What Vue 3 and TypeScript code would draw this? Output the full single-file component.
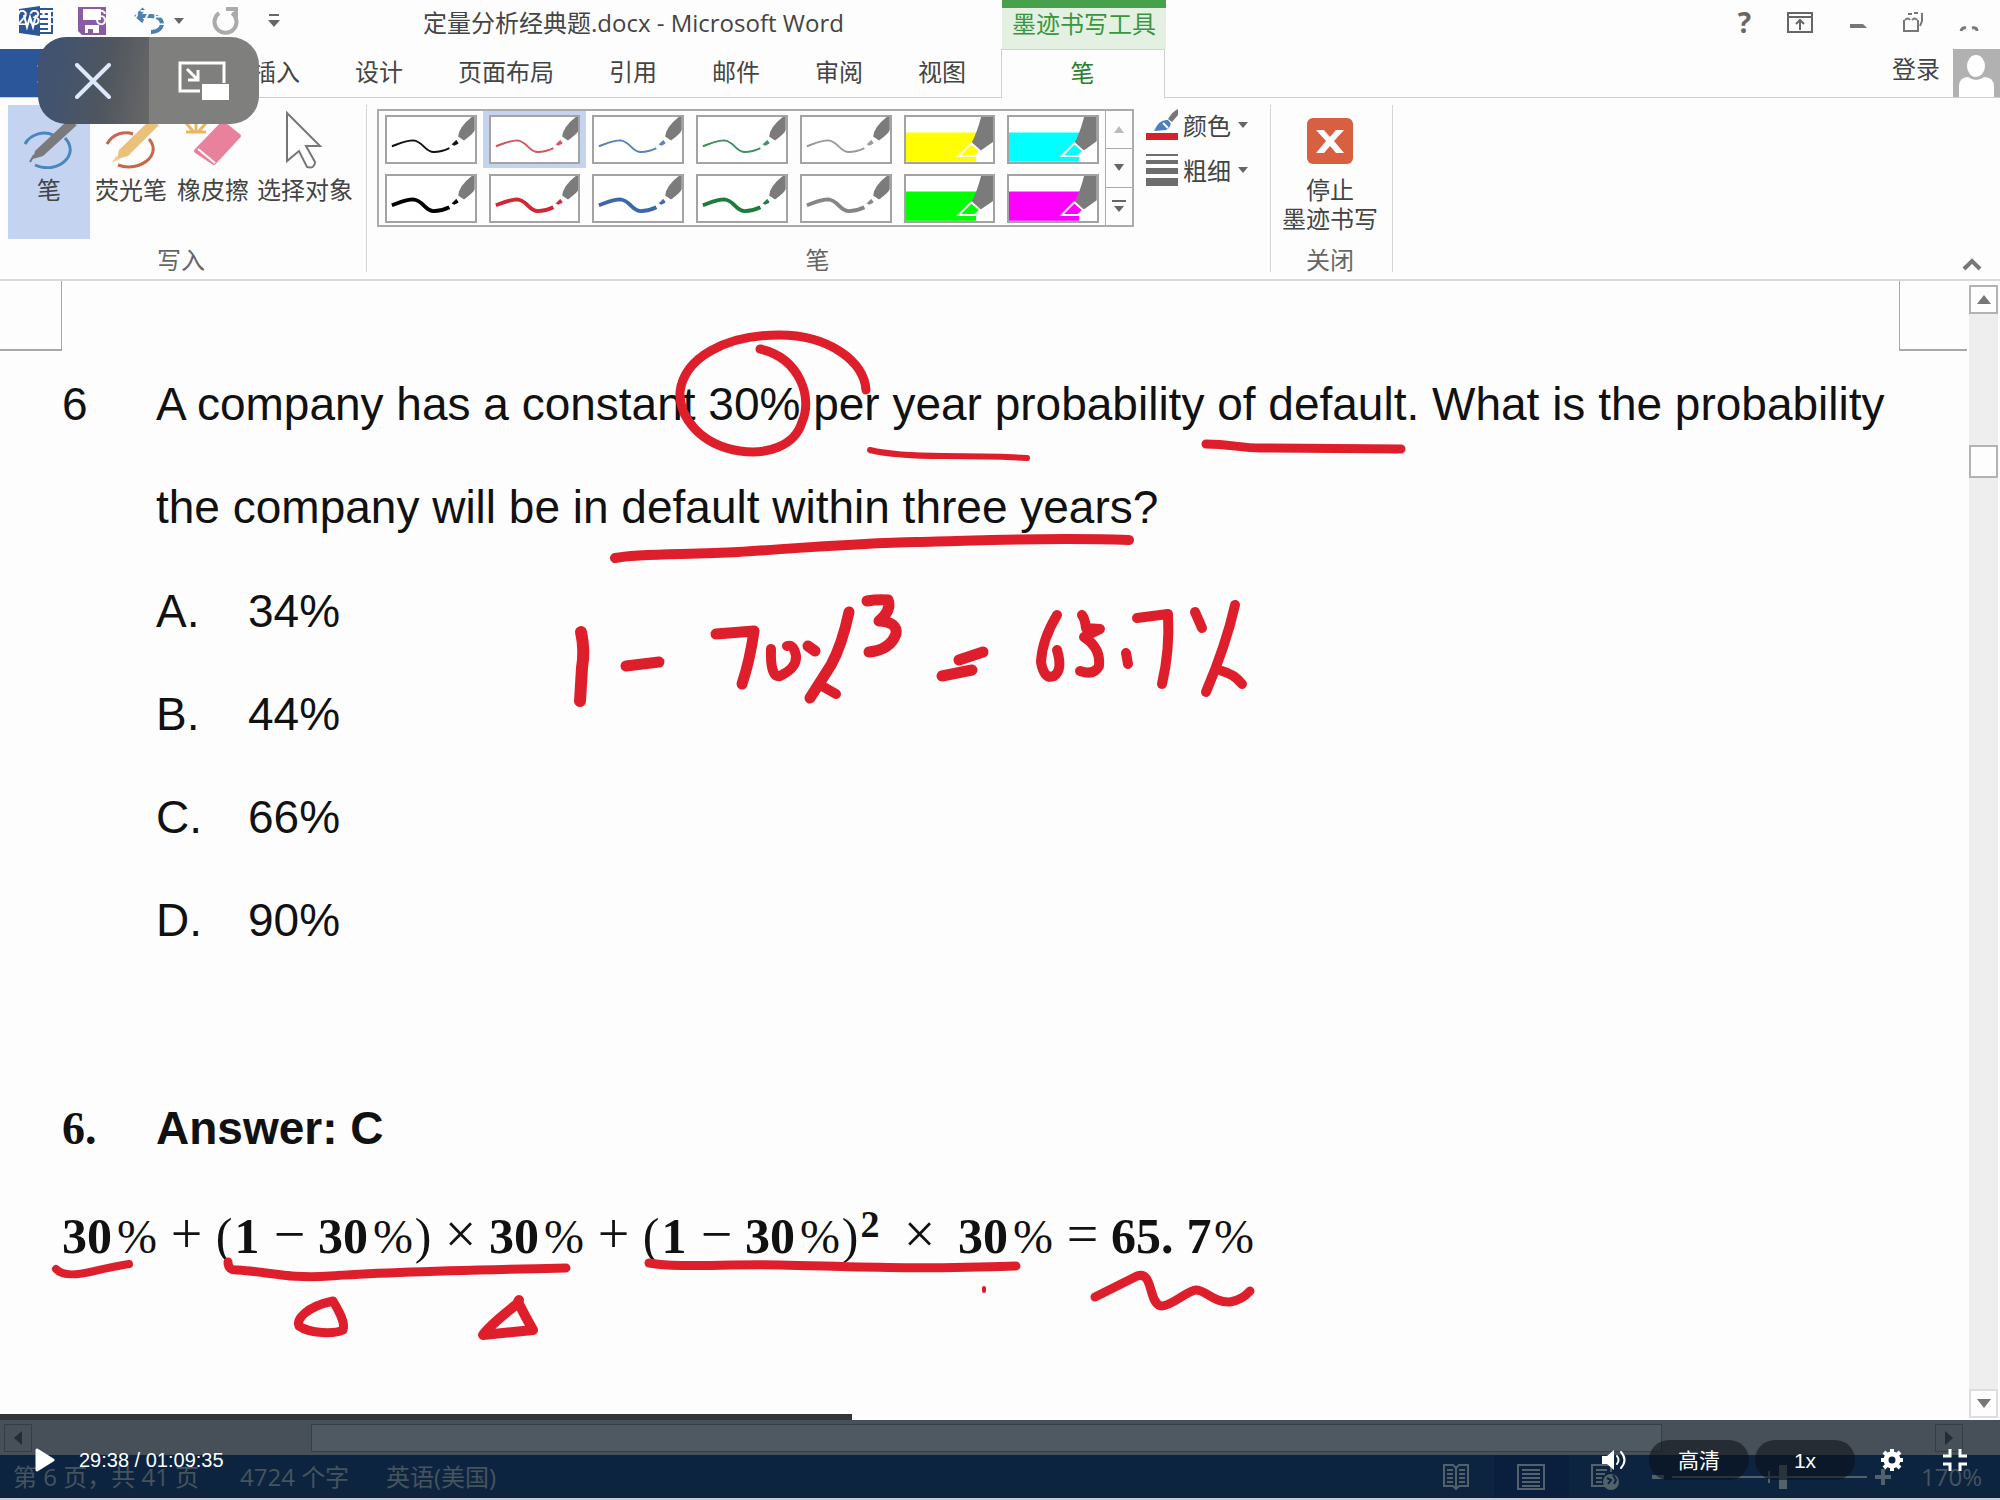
<script setup lang="ts">
import { ref } from 'vue'

interface Pen {
  color: string
  width: number
  marker: boolean
}

const tabs: string[] = ['开始', '插入', '设计', '页面布局', '引用', '邮件', '审阅', '视图']

const pens: Pen[] = [
  { color: '#111111', width: 2, marker: false },
  { color: '#d2555f', width: 2, marker: false },
  { color: '#5b82b5', width: 2, marker: false },
  { color: '#3f9060', width: 2, marker: false },
  { color: '#9a9a9a', width: 2, marker: false },
  { color: '#ffff00', width: 0, marker: true },
  { color: '#00ffff', width: 0, marker: true },
  { color: '#000000', width: 4, marker: false },
  { color: '#cf2733', width: 4, marker: false },
  { color: '#3d66ab', width: 4, marker: false },
  { color: '#1f7a3d', width: 4, marker: false },
  { color: '#858585', width: 4, marker: false },
  { color: '#00ff00', width: 0, marker: true },
  { color: '#ff00ff', width: 0, marker: true },
]
const selectedPen = ref(1)

const options = [
  { key: 'A.', value: '34%' },
  { key: 'B.', value: '44%' },
  { key: 'C.', value: '66%' },
  { key: 'D.', value: '90%' },
]

type Token = [kind: 'num' | 'one' | 'pct' | 'op' | 'paren' | 'sup' | 'gapop' | 'dec', text: string]
const formula: Token[] = [
  ['num', '30'], ['pct', '%'], ['op', '+'],
  ['paren', '('], ['one', '1'], ['op', '−'], ['num', '30'], ['pct', '%'], ['paren', ')'],
  ['op', '×'], ['num', '30'], ['pct', '%'], ['op', '+'],
  ['paren', '('], ['one', '1'], ['op', '−'], ['num', '30'], ['pct', '%'], ['paren', ')'], ['sup', '2'],
  ['gapop', '×'], ['num', '30'], ['pct', '%'], ['op', '='],
  ['dec', '65.'], ['one', '7'], ['pct', '%'],
]

const inkStrokes: { d: string; w: number }[] = [
  { d: 'M760 349C800 358 813 398 802 422C795 446 767 455 740 451C700 445 679 417 680 392C684 358 725 335 779 335C830 335 864 362 866 390', w: 9 },
  { d: 'M870 450Q895 456 944 456T1027 458', w: 6 },
  { d: 'M1206 444C1230 444 1240 448 1261 448L1401 449', w: 9 },
  { d: 'M615 558C640 553 690 555 738 552C800 548 860 543 917 542S1040 537 1129 540', w: 10 },
  { d: 'M581 632Q585 650 582 668L580 701', w: 12 },
  { d: 'M626 666L659 662', w: 11 },
  { d: 'M716 634L754 631Q750 660 742 684', w: 11 },
  { d: 'M771 649Q770 678 780 676Q797 668 796 656Q794 644 787 646', w: 10 },
  { d: 'M808 646L815 651', w: 11 },
  { d: 'M849 612Q842 645 831 665L810 698', w: 11 },
  { d: 'M822 686L836 694', w: 10 },
  { d: 'M867 601Q878 599 888 600Q892 610 879 621Q898 622 896 634Q890 650 869 652', w: 11 },
  { d: 'M959 660L983 652M942 676L972 670', w: 11 },
  { d: 'M1057 615Q1042 640 1041 662Q1044 680 1054 676Q1063 670 1057 650', w: 10 },
  { d: 'M1082 615Q1085 619 1086 628L1100 629L1084 637Q1101 648 1099 666Q1094 676 1080 671', w: 10 },
  { d: 'M1126 653L1128 664', w: 10 },
  { d: 'M1137 618L1168 614Q1170 650 1162 684', w: 10 },
  { d: 'M1195 612L1202 628M1235 605Q1226 645 1206 692M1222 671Q1234 674 1242 684', w: 10 },
  { d: 'M56 1269Q64 1278 90 1272T129 1264', w: 8 },
  { d: 'M228 1262Q228 1271 238 1270C270 1272 290 1279 330 1276S420 1271 566 1268', w: 9 },
  { d: 'M649 1263C680 1268 720 1264 780 1265S900 1270 1016 1266', w: 9 },
  { d: 'M333 1301C305 1307 296 1320 299 1326C310 1334 335 1334 343 1330C346 1322 337 1308 333 1301Z', w: 9 },
  { d: 'M519 1300L517 1304Q490 1325 483 1335L533 1330Q525 1316 518 1302', w: 10 },
  { d: 'M984 1288L984 1291', w: 4 },
  { d: 'M1095 1297L1137 1276C1154 1270 1148 1306 1162 1306C1172 1306 1188 1290 1196 1290C1206 1290 1214 1303 1230 1302Q1242 1300 1250 1291', w: 9 },
]

const zoom = ref(57)
</script>

<template>
  <div class="app">
    <header class="chrome">
      <div class="titlebar">
        <div class="qat">
          <svg width="34" height="30" viewBox="0 0 34 30"><path d="M14 3H33V27H14z" fill="#fff" stroke="#2b5797" stroke-width="2" /><path d="M20 8h9M20 13h9M20 18h9M20 23h9" stroke="#2b5797" stroke-width="2" /><path d="M0 3L21 0V30L0 27z" fill="#2b5797" /><path d="M5 9l3 12 3-10 3 10 3-12" fill="none" stroke="#fff" stroke-width="2" /></svg>
          <button class="plain save" aria-label="保存"><svg width="28" height="28" viewBox="0 0 28 28"><path d="M0 0H28V28H4L0 24z" fill="#8a5ba5" /><path d="M5 2H23V13H5zM7 18H21V26H7z" fill="#fff" /><path d="M10 22h5v5h-5z" fill="#8a5ba5" /></svg></button>
          <button class="plain undo" aria-label="撤消"><svg width="30" height="28" viewBox="0 0 30 28"><path d="M10 2L3 9L10 15M3 9H17C32 9 31 25 17 25" fill="none" stroke="#4a80b4" stroke-width="4" /></svg></button>
          <span class="caret small"></span>
          <button class="plain redo" aria-label="重复"><svg width="28" height="28" viewBox="0 0 28 28"><path d="M20 6A11 11 0 1 1 7 6" fill="none" stroke="#aaa" stroke-width="4" /><path d="M14 2H24V12" fill="none" stroke="#aaa" stroke-width="4" /></svg></button>
          <button class="plain custom" aria-label="自定义"><svg width="12" height="14" viewBox="0 0 12 14"><path d="M1 1h10" stroke="#666" stroke-width="2" /><path d="M0 6H12L6 13z" fill="#666" /></svg></button>
        </div>
        <h1 class="title">定量分析经典题.docx - Microsoft Word</h1>
        <div class="ctx-title">墨迹书写工具</div>
        <div class="win">
          <button class="plain help" aria-label="帮助">?</button>
          <button class="plain" aria-label="功能区显示选项"><svg width="26" height="21" viewBox="0 0 26 21"><path d="M1 1H25V20H1zM1 5H25M13 18V9M9 12l4-4 4 4" fill="none" stroke="#666" stroke-width="2" /></svg></button>
          <button class="plain" aria-label="最小化"><svg width="18" height="21" viewBox="0 0 18 21"><path d="M1 12H14L18 16H1z" fill="#777" /></svg></button>
          <button class="plain" aria-label="还原"><svg width="20" height="22" viewBox="0 0 20 22"><path d="M1 9V20H15V9M5 3h4M11 2h4M19 2v8l-2 5M2 9q3-3 5 0M9 9q3-3 5 0" fill="none" stroke="#777" stroke-width="2" /></svg></button>
          <button class="plain" aria-label="关闭"><svg width="20" height="22" viewBox="0 0 20 22"><path d="M2 20Q3 16 7 17M13 17Q18 16 18 20" fill="none" stroke="#777" stroke-width="3" /></svg></button>
        </div>
        <div class="clock"><span>23:31</span><span>6月27日</span></div>
      </div>

      <nav class="tabs">
        <button class="tab file">文件</button>
        <button v-for="t in tabs" :key="t" class="tab">{{ t }}</button>
        <button class="tab active">笔</button>
        <a class="login" href="#">登录</a>
        <svg class="avatar" width="47" height="48" viewBox="0 0 47 48"><path d="M0 0H47V48H0z" fill="#b1b1b1" /><ellipse cx="23" cy="17" rx="9" ry="11" fill="#fff" /><path d="M6 48V38Q6 28 15 28Q23 34 31 28Q41 28 41 38V48z" fill="#fff" /></svg>
      </nav>

      <div class="ribbon">
        <section class="group write">
          <div class="tools">
            <button class="tool picked">
              <svg width="56" height="64" viewBox="0 0 56 64"><path d="M4 39C10 28 24 26 32 30M44 33C60 50 36 70 14 60" fill="none" stroke="#4a86bd" stroke-width="3" /><path d="M46 16L56 20L22 51L12 54L14 46z" fill="#7a7a7a" /><path d="M13 50l-4 7" stroke="#777" stroke-width="2" /></svg>
              笔
            </button>
            <button class="tool hl">
              <svg width="56" height="64" viewBox="0 0 56 64"><path d="M4 39C10 28 22 26 30 29M46 34C60 50 36 68 15 60" fill="none" stroke="#c7664a" stroke-width="3" /><path d="M46 16L56 20L25 51L14 54L16 45z" fill="#ebc078" /><path d="M13 51l4 3-8 4z" fill="#f0cf98" /></svg>
              荧光笔
            </button>
            <button class="tool er">
              <svg width="64" height="64" viewBox="0 0 64 64"><path d="M15 14v14M4 17l8 9M26 17l-8 9M5 27h20" stroke="#e8b860" stroke-width="3" fill="none" /><path d="M15 46L42 18L58 31L33 58z" fill="#e8829c" stroke="#e8829c" stroke-width="4" stroke-linejoin="round" /><path d="M17 44L34 58" stroke="#fff" stroke-width="2" /></svg>
              橡皮擦
            </button>
            <button class="tool sel">
              <svg width="56" height="64" viewBox="0 0 56 64"><path d="M10 8L43 41H29L38 57Q38 64 30 62L22 46L10 56z" fill="#fff" stroke="#777" stroke-width="2" /></svg>
              选择对象
            </button>
          </div>
          <p class="caption">写入</p>
        </section>

        <section class="group pens">
          <div class="pen-row">
            <div class="gallery">
              <div class="cells">
                <button v-for="(p, i) in pens" :key="i" class="cell" :class="{ on: i === selectedPen }" :aria-label="'笔 ' + (i + 1)" @click="selectedPen = i">
                  <svg viewBox="0 0 90 46" preserveAspectRatio="none">
                    <template v-if="p.marker">
                      <path d="M0 16H72V46H0z" :fill="p.color" />
                      <path d="M77 0H90V25L76 35L67 27Q73 16 77 0z" fill="#7b7b7b" />
                      <path d="M67 27L76 35L71 40H54z" :fill="p.color" stroke="#fff" stroke-width="2" />
                    </template>
                    <template v-else>
                      <path d="M5 30C16 26 20 24 27 24C37 25 39 36 48 36Q56 36 64 32" fill="none" :stroke="p.color" :stroke-width="p.width" />
                      <path d="M67 28l4-4 2 3-4 2z" :fill="p.color" :stroke="p.color" stroke-width="1" />
                      <path d="M90 0H87Q74 10 73 20L79 24Q90 16 90 13z" fill="#7b7b7b" />
                    </template>
                  </svg>
                </button>
              </div>
              <div class="steps">
                <button aria-label="上一行"><svg width="10" height="7" viewBox="0 0 10 7"><path d="M0 7L5 0L10 7z" fill="#bbb" /></svg></button>
                <button aria-label="下一行"><svg width="10" height="7" viewBox="0 0 10 7"><path d="M0 0H10L5 7z" fill="#666" /></svg></button>
                <button aria-label="更多"><svg width="14" height="12" viewBox="0 0 14 12"><path d="M0 0H14V2H0zM2 6H12L7 12z" fill="#666" /></svg></button>
              </div>
            </div>
            <div class="style-menu">
              <button class="menu"><svg width="32" height="32" viewBox="0 0 32 32"><path d="M0 24H32V31H0z" fill="#d91f2b" /><path d="M8 22Q13 10 22 11Q28 16 20 21z" fill="#4d7fbd" /><path d="M17 14l5 5" stroke="#fff" stroke-width="2" /><path d="M22 10Q27 2 32 0V6L26 13z" fill="#777" /></svg>颜色<span class="caret"></span></button>
              <button class="menu"><svg width="32" height="32" viewBox="0 0 32 32"><path d="M0 0H32V2H0zM0 6H32V10H0zM0 14H32V20H0zM0 24H32V32H0z" fill="#6d6d6d" /></svg>粗细<span class="caret"></span></button>
            </div>
          </div>
          <p class="caption">笔</p>
        </section>

        <section class="group close">
          <button class="stop">
            <svg width="48" height="48" viewBox="0 0 48 48"><rect x="1" y="1" width="46" height="46" rx="6" fill="#d95f41" /><path d="M10 13H18L24 20L30 13H38L28 24L38 36H30L24 29L18 36H10L20 24z" fill="#fff" /></svg>
            <span>停止</span><span>墨迹书写</span>
          </button>
          <p class="caption">关闭</p>
        </section>
        <button class="plain collapse" aria-label="折叠功能区"><svg width="20" height="14" viewBox="0 0 20 14"><path d="M2 12L10 4L18 12" fill="none" stroke="#777" stroke-width="4" /></svg></button>
      </div>
    </header>

    <main class="workspace">
      <article class="page">
        <i class="crop left"></i>
        <i class="crop right"></i>
        <div class="row">
          <span class="no">6</span>
          <p>A company has a constant 30% per year probability of default. What is the probability<br />the company will be in default within three years?</p>
        </div>
        <ol class="options">
          <li v-for="o in options" :key="o.key"><span class="key">{{ o.key }}</span>{{ o.value }}</li>
        </ol>
        <div class="row answer">
          <span class="no serif">6.</span>
          <p>Answer: C</p>
        </div>
        <div class="formula">
          <span v-for="(t, i) in formula" :key="i" :class="t[0]">{{ t[1] }}</span>
        </div>
        <svg class="ink" width="1960" height="1133" viewBox="0 281 1960 1133">
          <path v-for="(s, i) in inkStrokes" :key="i" :d="s.d" :stroke-width="s.w" />
        </svg>
      </article>
      <div class="vscroll">
        <button aria-label="向上滚动"><svg width="14" height="9" viewBox="0 0 14 9"><path d="M0 9L7 0L14 9z" fill="#777" /></svg></button>
        <div class="vthumb"></div>
        <button class="down" aria-label="向下滚动"><svg width="14" height="9" viewBox="0 0 14 9"><path d="M0 0H14L7 9z" fill="#777" /></svg></button>
      </div>
    </main>

    <div class="hscroll">
      <button aria-label="向左滚动"><svg width="8" height="14" viewBox="0 0 8 14"><path d="M8 0V14L0 7z" fill="#222c35" /></svg></button>
      <div class="htrack"><div class="hthumb"></div></div>
      <button aria-label="向右滚动"><svg width="8" height="14" viewBox="0 0 8 14"><path d="M0 0V14L8 7z" fill="#222c35" /></svg></button>
    </div>

    <footer class="status">
      <span class="s-page">第 6 页，共 41 页</span>
      <span class="s-words">4724 个字</span>
      <span>英语(美国)</span>
      <div class="views">
        <button class="view" aria-label="阅读视图"><svg width="26" height="26" viewBox="0 0 26 26"><path d="M1 1H10L13 4L16 1H25V22H16L13 25L10 22H1zM13 4V25M4 6h6M4 10h6M4 14h6M4 18h6M16 6h6M16 10h6M16 14h6M16 18h6" fill="none" stroke="#53616a" stroke-width="2" /></svg></button>
        <button class="view cur" aria-label="页面视图"><svg width="28" height="26" viewBox="0 0 28 26"><path d="M1 1H27V25H1zM5 6h18M5 10h18M5 14h18M5 18h18M5 22h18" fill="none" stroke="#53616a" stroke-width="2" /></svg></button>
        <button class="view" aria-label="Web 版式"><svg width="30" height="26" viewBox="0 0 30 26"><path d="M14 22H1V1H20V8M5 6h11M5 10h9M5 14h6M5 18h6" fill="none" stroke="#53616a" stroke-width="2" /><circle cx="20" cy="18" r="8" fill="#53616a" /><path d="M16 14l4 2-3 4M22 11l3 5-2 4" fill="none" stroke="#0d2441" stroke-width="2" /></svg></button>
      </div>
      <span class="minus"></span>
      <input v-model="zoom" class="zoom" type="range" min="0" max="100" aria-label="缩放" />
      <svg class="plus" width="16" height="16" viewBox="0 0 16 16"><path d="M0 8H16M8 0V16" stroke="#53616a" stroke-width="4" /></svg>
      <span class="percent">170%</span>
    </footer>

    <div class="player">
      <div class="progress"></div>
      <div class="controls">
        <button class="plain" aria-label="播放"><svg width="20" height="24" viewBox="0 0 20 24"><path d="M2 2L18 12L2 22z" fill="#fff" stroke="#fff" stroke-width="3" stroke-linejoin="round" /></svg></button>
        <span class="time">29:38 / 01:09:35</span>
        <button class="plain vol" aria-label="音量"><svg width="26" height="22" viewBox="0 0 26 22"><path d="M1 7H6L13 1V21L6 15H1z" fill="#fff" /><path d="M16 7Q19 11 16 15M20 3Q27 11 20 19" fill="none" stroke="#fff" stroke-width="2" stroke-linecap="round" /></svg></button>
        <button class="pill">高清</button>
        <button class="pill">1x</button>
        <button class="plain gear" aria-label="设置"><svg width="22" height="22" viewBox="0 0 22 22"><circle cx="11" cy="11" r="6" fill="none" stroke="#fff" stroke-width="5" /><path d="M11 0V4M11 18V22M0 11H4M18 11H22M3 3L6 6M16 16L19 19M19 3L16 6M6 16L3 19" stroke="#fff" stroke-width="4" /></svg></button>
        <button class="plain shrink" aria-label="退出全屏"><svg width="24" height="22" viewBox="0 0 24 22"><path d="M7 0V7H0M17 0V7H24M7 22V15H0M17 22V15H24" fill="none" stroke="#fff" stroke-width="3" /></svg></button>
      </div>
    </div>

    <div class="pip">
      <button aria-label="关闭视频"><svg width="36" height="36" viewBox="0 0 36 36"><path d="M2 2L34 34M34 2L2 34" stroke="#dde8fb" stroke-width="4" stroke-linecap="round" /></svg></button>
      <button aria-label="画中画"><svg width="52" height="40" viewBox="0 0 52 40"><path d="M22 30H2V2H46V22" fill="none" stroke="#fff" stroke-width="3" /><path d="M24 23H51V39H24z" fill="#fff" /><path d="M9 8L19 18M20 9V19H10" fill="none" stroke="#fff" stroke-width="3" /></svg></button>
    </div>
  </div>
</template>

<style>
body {
  margin: 0;
  background: #fdfdfd;
}
</style>

<style scoped>
.app {
  position: relative;
  display: flex;
  flex-direction: column;
  min-height: 100vh;
  overflow: hidden;
  background: #fdfdfd;
  color: #444;
  font-family: "Open Sans", "Noto Sans CJK SC", sans-serif;
  font-size: 24px;
  line-height: 29px;
}
button {
  margin: 0;
  padding: 0;
  border: 0;
  background: none;
  color: inherit;
  font: inherit;
  box-sizing: border-box;
}
svg {
  display: block;
  flex: none;
}
p, h1, ol {
  margin: 0;
  padding: 0;
}
.plain {
  display: flex;
  align-items: center;
}
.titlebar {
  position: relative;
  display: flex;
  height: 49px;
}
.qat {
  display: flex;
  align-items: center;
  box-sizing: border-box;
  width: 423px;
  height: 42px;
  padding-left: 19px;
}
.save { margin-left: 25px; }
.undo { margin-left: 28px; }
.redo { margin-left: 28px; }
.custom { margin-left: 28px; }
.caret {
  border: 5px solid transparent;
  border-top: 6px solid #666;
  border-bottom: 0;
}
.caret.small { margin-left: 10px; }
.title {
  width: 579px;
  font-size: 24px;
  font-weight: 400;
  line-height: 46px;
  white-space: nowrap;
}
.ctx-title {
  box-sizing: border-box;
  width: 164px;
  border-top: 8px solid #47a04b;
  background: #e4f1e2;
  color: #3a963e;
  text-align: center;
  line-height: 32px;
}
.win {
  display: flex;
  align-items: center;
  gap: 36px;
  height: 44px;
  margin-left: auto;
  padding-right: 21px;
}
.help {
  font-weight: 700;
  font-size: 28px;
  color: #666;
}
.clock {
  position: absolute;
  left: 16px;
  top: 4px;
  display: flex;
  gap: 28px;
  color: #fff;
  font-family: Inter, "Noto Sans CJK SC", sans-serif;
  font-size: 20px;
}
.tabs {
  display: flex;
  box-sizing: border-box;
  height: 49px;
  border-bottom: 1px solid #d0d0d0;
}
.tab {
  padding: 0 28px 4px 27px;
  white-space: nowrap;
}
.tab.file {
  width: 122px;
  background: #2b579a;
  color: #fff;
}
.tab.active {
  width: 164px;
  height: 49px;
  margin-left: 7px;
  border: 1px solid #d0d0d0;
  border-bottom: 0;
  background: #fdfdfd;
  color: #2a7d2e;
}
.login {
  margin-left: auto;
  padding-right: 13px;
  color: #444;
  line-height: 40px;
  text-decoration: none;
}
.ribbon {
  display: flex;
  box-sizing: border-box;
  height: 183px;
  border-bottom: 2px solid #d9d9d9;
}
.group {
  display: flex;
  flex-direction: column;
  justify-content: space-between;
  box-sizing: border-box;
  height: 167px;
  margin-top: 7px;
  border-right: 1px solid #d6d6d6;
}
.caption {
  color: #666;
  text-align: center;
  line-height: 24px;
}
.write { width: 367px; }
.write .caption { padding-right: 4px; }
.tools {
  display: flex;
  padding-left: 8px;
}
.tool {
  display: flex;
  flex-direction: column;
  align-items: center;
  width: 82px;
  height: 134px;
  white-space: nowrap;
}
.tool svg { margin-bottom: 6px; }
.picked { background: #c3d3f0; }
.tool.sel { width: 102px; }
.pens { width: 904px; }
.pens .caption { padding-right: 2px; }
.pen-row {
  display: flex;
  gap: 12px;
  padding: 4px 10px 0 10px;
}
.gallery {
  display: flex;
  box-sizing: border-box;
  width: 757px;
  height: 118px;
  border: 2px solid #ababab;
}
.cells {
  display: grid;
  grid-template-columns: repeat(7, 1fr);
  row-gap: 2px;
  flex: 1;
}
.cell {
  display: flex;
  padding: 4px 6px;
}
.cell svg {
  width: 100%;
  height: 100%;
  box-sizing: border-box;
  border: 2px solid #a3a3a3;
  background: #fff;
}
.cell.on { background: #c5d3ec; }
.steps {
  display: flex;
  flex-direction: column;
  width: 26px;
  border-left: 1px solid #ababab;
}
.steps button {
  display: flex;
  flex: 1;
  align-items: center;
  justify-content: center;
  border-bottom: 1px solid #ababab;
}
.steps button:last-child { border: 0; }
.style-menu {
  display: flex;
  flex-direction: column;
  gap: 13px;
}
.menu {
  display: flex;
  align-items: center;
  height: 32px;
  white-space: nowrap;
}
.menu svg { margin-right: 5px; }
.menu .caret { margin-left: 7px; }
.close { width: 122px; }
.close .caption { padding-right: 3px; }
.stop {
  display: flex;
  flex-direction: column;
  align-items: center;
  padding: 12px 3px 0 0;
  white-space: nowrap;
}
.stop svg { margin-bottom: 10px; }
.collapse {
  align-self: flex-end;
  margin: 0 18px 8px auto;
}
.workspace {
  display: flex;
  flex: 1;
}
.page {
  position: relative;
  flex: 1;
  min-width: 0;
  padding: 72px 0 0 62px;
  color: #111;
  font-family: "Liberation Sans", Arial, sans-serif;
  font-size: 46px;
  line-height: 103px;
  white-space: nowrap;
}
.crop {
  position: absolute;
  top: 0;
  height: 68px;
  border: 0 solid #a8a8a8;
  border-bottom-width: 2px;
}
.crop.left {
  left: 0;
  width: 61px;
  border-right-width: 1px;
}
.crop.right {
  right: 0;
  width: 67px;
  border-left-width: 1px;
}
.row { display: flex; }
.no { width: 94px; }
.options {
  padding: 1px 0 0 94px;
  list-style: none;
}
.options li { display: flex; }
.key { width: 92px; }
.answer {
  margin-top: 105px;
  font-weight: 700;
}
.serif { font-family: "Liberation Serif", serif; }
.formula {
  display: flex;
  align-items: baseline;
  margin-top: 3px;
  font-family: "Liberation Serif", serif;
  font-size: 50px;
}
.formula span { text-align: center; }
.formula .num, .formula .one, .formula .dec, .formula .sup { font-weight: 700; }
.formula .num { width: 54px; text-align: left; }
.formula .one { width: 28px; }
.formula .pct { width: 42px; font-size: 48px; }
.formula .op { width: 57px; font-size: 56px; }
.formula .paren { width: 18px; }
.formula .sup {
  width: 22px;
  font-size: 38px;
  line-height: 38px;
  align-self: flex-start;
  margin-top: 22px;
}
.formula .gapop { width: 77px; font-size: 56px; }
.formula .dec { width: 74px; text-align: left; }
.ink {
  position: absolute;
  left: 0;
  top: 0;
}
.ink path {
  fill: none;
  stroke: #de1f2b;
  stroke-linecap: round;
  stroke-linejoin: round;
}
.vscroll {
  display: flex;
  flex-direction: column;
  width: 29px;
  margin: 4px 2px 2px;
  background: #eee;
}
.vscroll button, .vthumb {
  display: flex;
  align-items: center;
  justify-content: center;
  box-sizing: border-box;
  height: 29px;
  border: 2px solid #b3b3b3;
  background: #fdfdfd;
}
.vthumb {
  height: 33px;
  margin-top: 131px;
}
.vscroll .down {
  margin-top: auto;
  border-color: #ddd;
}
.hscroll {
  display: flex;
  box-sizing: border-box;
  height: 35px;
  padding: 4px 37px 3px 4px;
  background: #475059;
}
.hscroll button {
  display: flex;
  align-items: center;
  justify-content: center;
  width: 28px;
  border: 1px solid #343e47;
}
.htrack {
  flex: 1;
  display: flex;
}
.hthumb {
  width: 71%;
  margin-left: 279px;
  border: 1px solid #353f48;
  background: #4f5961;
  box-sizing: border-box;
}
.status {
  display: flex;
  align-items: center;
  height: 43px;
  padding: 0 18px 0 13px;
  border-bottom: 2px solid #c9ccd0;
  background: #0d2441;
  color: #46545c;
  white-space: nowrap;
}
.s-page { width: 227px; }
.s-words { width: 146px; }
.views {
  display: flex;
  align-self: stretch;
  margin-left: auto;
}
.view {
  display: flex;
  align-items: center;
  justify-content: center;
  width: 75px;
}
.cur { background: #0a1f3d; }
.minus {
  width: 12px;
  height: 4px;
  margin: 0 8px 0 8px;
  background: #53616a;
}
.zoom {
  width: 195px;
  height: 22px;
  margin: 0;
  appearance: none;
  background: linear-gradient(#53616a, #53616a) center / 100% 2px no-repeat, linear-gradient(#53616a, #53616a) center / 2px 12px no-repeat;
}
.zoom::-webkit-slider-thumb {
  appearance: none;
  width: 8px;
  height: 24px;
  background: #53616a;
}
.plus { margin-left: 8px; }
.percent { margin-left: 30px; }
.player {
  position: absolute;
  left: 0;
  right: 0;
  bottom: 0;
  height: 86px;
  color: #fff;
}
.progress {
  width: 42.6%;
  height: 6px;
  background: #333634;
}
.controls {
  display: flex;
  align-items: center;
  height: 80px;
  padding: 0 33px 0 35px;
}
.time {
  margin-left: 24px;
  font-family: "Liberation Sans", Arial, sans-serif;
  font-size: 20px;
}
.vol { margin: 0 22px 0 auto; }
.pill {
  width: 100px;
  height: 40px;
  margin-right: 6px;
  border-radius: 20px;
  background: rgba(10, 14, 22, 0.55);
  font-family: "Liberation Sans", "Noto Sans CJK SC", sans-serif;
  font-size: 21px;
}
.gear { margin-left: 20px; }
.shrink { margin-left: 40px; }
.pip {
  position: absolute;
  left: 38px;
  top: 37px;
  display: flex;
  width: 221px;
  height: 87px;
  border-radius: 28px;
  overflow: hidden;
}
.pip button {
  display: flex;
  align-items: center;
  justify-content: center;
  flex: 1;
  background: linear-gradient(100deg, #42536f 20%, #50565f 60%, #686867 100%);
}
.pip button + button {
  background: #7f7f7e;
}
</style>
